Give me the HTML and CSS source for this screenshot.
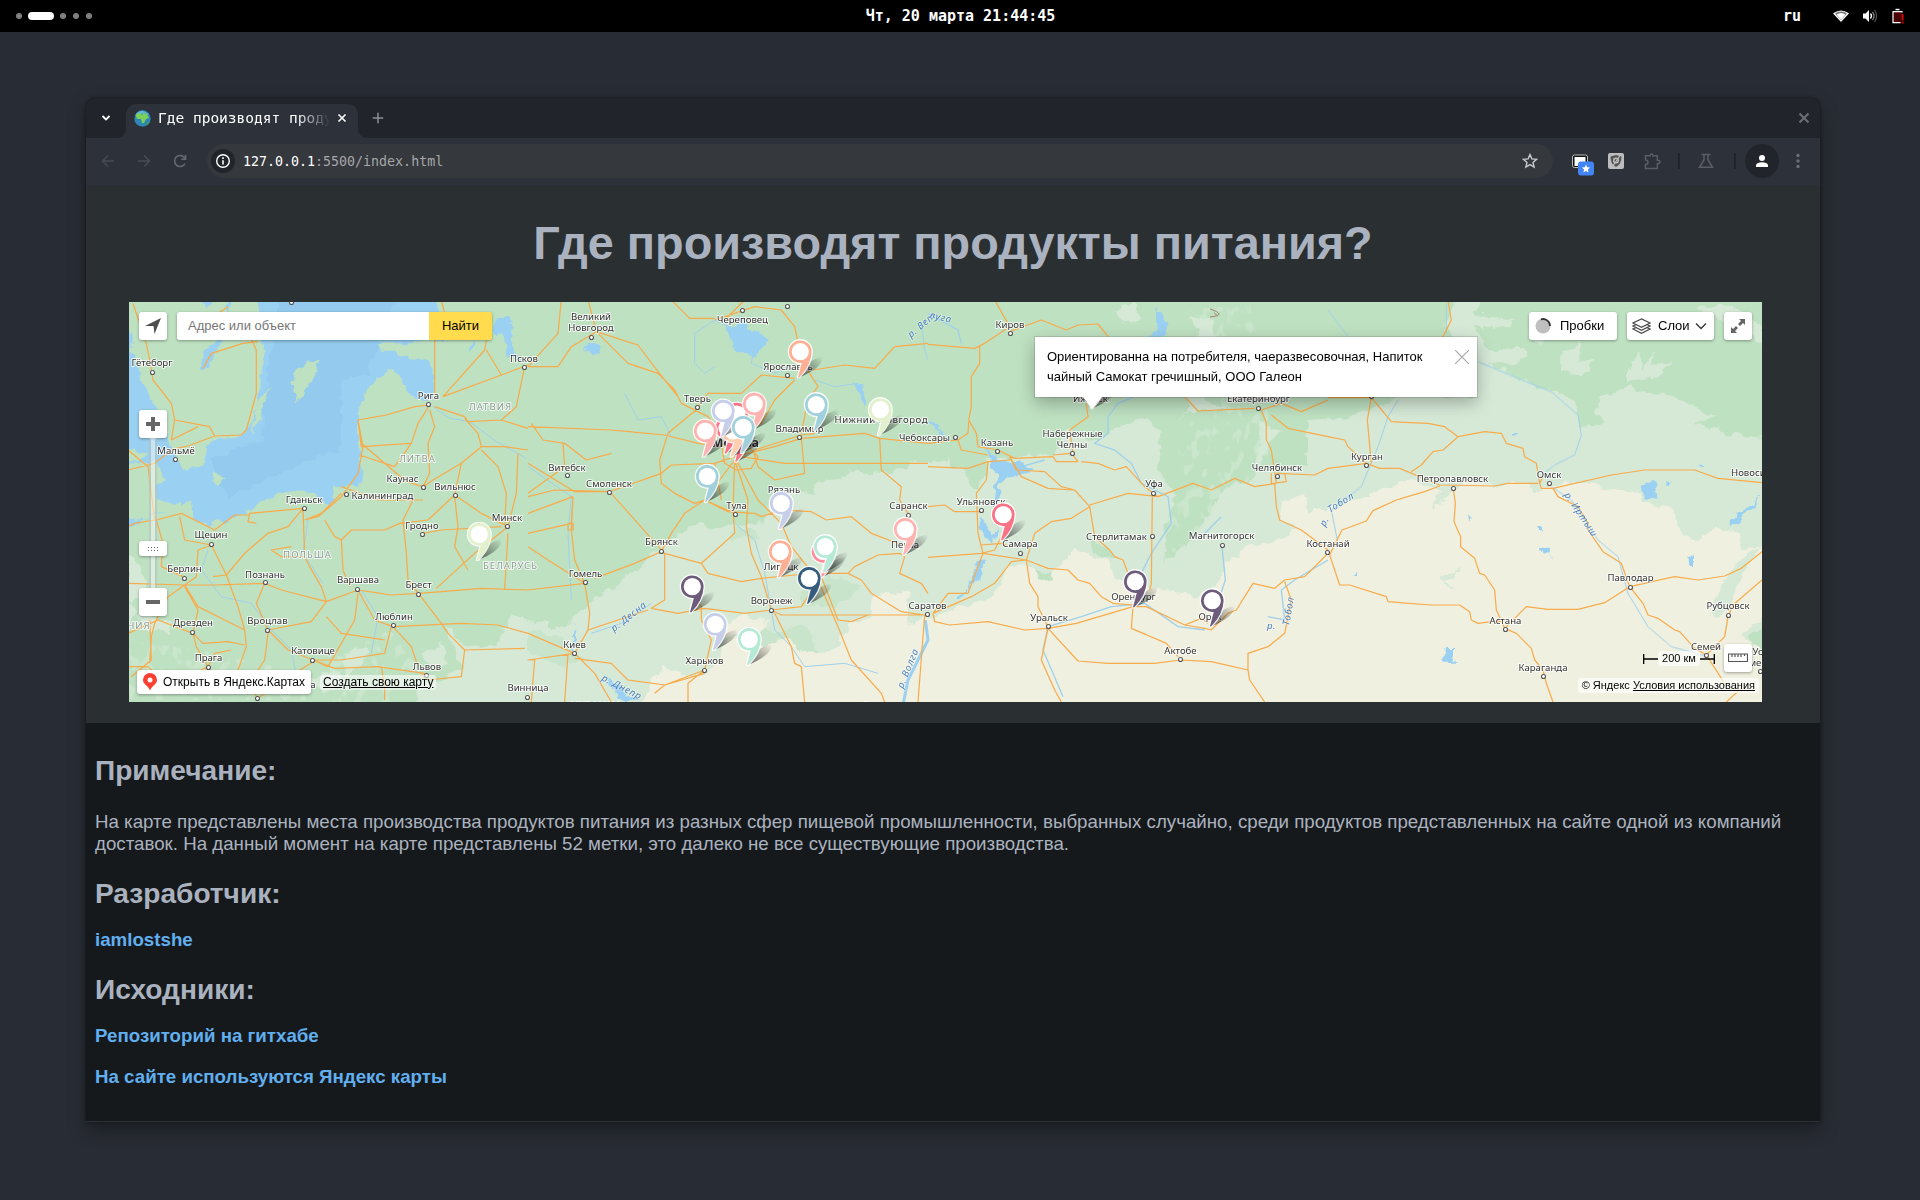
FILE: index.html
```html
<!DOCTYPE html>
<html lang="ru">
<head>
<meta charset="utf-8">
<title>Где производят продукты питания?</title>
<link rel="stylesheet" href="styles.css">
</head>
<body>
<header class="panel">
  <div class="workspaces"><i></i><i class="on"></i><i></i><i></i><i></i></div>
  <div class="clock">Чт, 20 марта 21:44:45</div>
  <div class="tray">
    <span class="lang">ru</span>
    <svg width="16" height="16" viewBox="0 0 16 16"><path d="M1 5.5Q8 .5 15 5.500L8 13z" fill="#777" stroke="#fff" stroke-width="1.200"/><path d="M3.500 6.500Q8 3.500 12.500 6.500L8 11.500z" fill="#fff"/></svg>
    <svg width="16" height="16" viewBox="0 0 16 16"><path d="M1 5.500h2.500L7 2v12l-3.500-3.500H1z" fill="#fff"/><path d="M8.500 5.500q2 2.500 0 5" fill="none" stroke="#fff" stroke-width="1.300"/><path d="M10.500 3.800q3 4.200 0 8.400" fill="none" stroke="#888" stroke-width="1.200"/><path d="M12.500 2q4 6 0 12" fill="none" stroke="#555" stroke-width="1.200"/></svg>
    <svg width="14" height="16" viewBox="0 0 14 16"><path d="M4.500 1.500h4" stroke="#fff" stroke-width="1.400"/><path d="M11 4.500v-.9H2v11h7.500" fill="#4a0000" stroke="#fff" stroke-width="1.200"/><path d="M11.500 6v6.500M11.500 13.500v2" stroke="#d00" stroke-width="2"/></svg>
  </div>
</header>

<main class="window">
  <div class="tabstrip">
    <div class="tabmenu"><svg width="10" height="8" viewBox="0 0 10 8"><path d="M1.500 2L5 5.500 8.500 2" fill="none" stroke="#fff" stroke-width="1.800"/></svg></div>
    <div class="tab">
      <svg width="17" height="17" viewBox="0 0 17 17"><circle cx="8.500" cy="8.500" r="8.200" fill="#2f86b5"/><path d="M2 4Q5 .5 9 .7L15 4 14 5 11 3 4 5z" fill="#5fb4dd"/><path d="M1.500 5Q3 3 6 3L8 5 9.500 3 13 4 15 8 12 9 10 13 8 13 7 9 3 9z" fill="#7bd05b"/><path d="M12 13l4-1-3 3.500z" fill="#3fa04d"/></svg>
      <span class="tabtitle">Где производят продукты</span>
      <svg width="10" height="10" viewBox="0 0 10 10"><path d="M1.500 1.500l7 7m0-7l-7 7" stroke="#fff" stroke-width="1.600"/></svg>
    </div>
    <svg class="newtab" width="12" height="12" viewBox="0 0 12 12"><path d="M6 .8v10.400M.8 6h10.400" stroke="#8c9096" stroke-width="1.500"/></svg>
    <svg class="winclose" width="12" height="12" viewBox="0 0 12 12"><path d="M1.500 1.500l9 9m0-9l-9 9" stroke="#6b6f76" stroke-width="2"/></svg>
  </div>
  <div class="toolbar">
    <svg width="14" height="14" viewBox="0 0 14 14"><path d="M13 7H1.500M7 1.500L1.500 7 7 12.500" fill="none" stroke="#474b52" stroke-width="1.500"/></svg>
    <svg width="14" height="14" viewBox="0 0 14 14"><path d="M1 7h11.500M7 1.500L12.500 7 7 12.500" fill="none" stroke="#474b52" stroke-width="1.500"/></svg>
    <svg width="14" height="14" viewBox="0 0 14 14"><path d="M12 9.500A5.500 5.500 0 1 1 12 4.500M12.500 1v4.200H8.300" fill="none" stroke="#666a70" stroke-width="1.600"/></svg>
    <div class="omnibox">
      <span class="info"><svg width="16" height="16" viewBox="0 0 16 16"><circle cx="8" cy="8" r="6.300" fill="none" stroke="#fff" stroke-width="1.400"/><path d="M8 4.300v1.600M8 7.200v4.300" stroke="#fff" stroke-width="1.600"/></svg></span>
      <span class="url"><b>127.0.0.1</b>:5500/index.html</span>
      <svg class="star" width="16" height="16" viewBox="0 0 16 16"><path d="M8 1.500l1.900 4.400 4.700.4-3.600 3.100 1.100 4.700L8 11.600l-4.100 2.500L5 9.400 1.400 6.300l4.700-.4z" fill="none" stroke="#c8cacc" stroke-width="1.400"/></svg>
    </div>
    <svg class="ext" width="24" height="24" viewBox="0 0 24 24"><rect x="2.500" y="3" width="15" height="12.500" rx="2" fill="#111" stroke="#b9beb5"/><path d="M4.500 5h11v9h-11z" fill="#fff"/><rect x="8" y="9.500" width="16" height="14" rx="3" fill="#4285f4"/><path d="M16 12.500l1.200 2.800 3 .2-2.300 2 .7 3-2.600-1.600-2.600 1.600.7-3-2.300-2 3-.2z" fill="#fff"/></svg>
    <svg width="16" height="16" viewBox="0 0 16 16"><rect width="16" height="16" rx="2" fill="#bdbdbd"/><path d="M8 2l5.500 1.500q0 8-5.500 10.500Q2.500 11.500 2.500 3.500z" fill="#555"/><circle cx="8" cy="7.500" r="2.300" fill="none" stroke="#bdbdbd" stroke-width="1.500"/><path d="M13 1L5 13" stroke="#bdbdbd" stroke-width="1.200"/></svg>
    <svg width="17" height="17" viewBox="0 0 17 17"><path d="M1.500 2.800H6.300V2.400Q6.500 1 7.700 1T9 2.400v.4h4.300V7.300Q16 7.300 16 9t-2.700 1.700v4.800H1.500V11.500Q4 11.300 4 9.200T1.500 6.900z" fill="none" stroke="#5a5e64" stroke-width="1.500"/></svg>
    <i class="sep"></i>
    <svg class="flask" width="16" height="16" viewBox="0 0 16 16"><path d="M3.500 1.500h9M6 1.500V7L1.500 14.300h13L10 7V1.500" fill="none" stroke="#5a5e64" stroke-width="1.500"/></svg>
    <i class="sep s2"></i>
    <span class="avatar"><svg width="14" height="14" viewBox="0 0 14 14"><circle cx="7" cy="4" r="3" fill="#fff"/><path d="M1 13v-2q1-2.800 6-2.800T13 11v2z" fill="#fff"/></svg></span>
    <svg class="dots" width="4" height="16" viewBox="0 0 4 16" fill="#6b6f75"><circle cx="2" cy="2.500" r="1.700"/><circle cx="2" cy="8" r="1.700"/><circle cx="2" cy="13.500" r="1.700"/></svg>
  </div>

  <section class="hero">
    <h1>Где производят продукты питания?</h1>
    <div class="map">
      <svg class="canvas" width="1633" height="400" viewBox="129 302 1633 400">
        <defs>
          <filter id="rough" filterUnits="userSpaceOnUse" x="120" y="290" width="1660" height="430"><feTurbulence type="fractalNoise" baseFrequency=".09" numOctaves="3" seed="4" result="n"/><feDisplacementMap in="SourceGraphic" in2="n" scale="11" xChannelSelector="R" yChannelSelector="G"/></filter>
          <filter id="relief" filterUnits="userSpaceOnUse" x="120" y="290" width="1660" height="430"><feTurbulence type="fractalNoise" baseFrequency=".11 .07" numOctaves="2" seed="9" result="n"/><feColorMatrix in="n" values="0 0 0 0 .66  0 0 0 0 .83  0 0 0 0 .68  9 0 0 0 -4.9" result="m"/><feComposite in="m" in2="SourceGraphic" operator="in"/></filter>
          <linearGradient id="sh" x1="0" y1="1" x2="1" y2="0"><stop offset="0" stop-opacity=".6"/><stop offset=".5" stop-opacity=".3"/><stop offset="1" stop-opacity="0"/></linearGradient>
          <g id="c"><circle r="2" fill="#fff" stroke="#555" stroke-width="1.100"/></g>
          <g id="pin"><path d="M-2 26C4 13 12 7 22 5 23 13 13 20-2 26z" fill="url(#sh)"/><path d="M11.300 0A11.300 11.300 0 1 0 1.500 11.200L-2.300 25.500H-1Q11 13 11.300 0z" fill="currentColor" stroke="#fff" stroke-opacity=".85" stroke-width="2.600" stroke-linejoin="round" paint-order="stroke"/><circle r="8.600" fill="#fff"/></g>
        </defs>
        <rect x="129" y="302" width="1633" height="400" fill="#bee1c1"/>
        <g filter="url(#rough)">
          <g transform="translate(128 300) scale(.33333)">
            <path class="lt" d="M950 970L1010 1040 1100 1040 1130 990 1200 970 1260 960V1260H850L870 1150 950 1140 1000 1100zM0 900L30 930 0 980zM650 1060L720 1040 700 1100 650 1130zM0 760l40 50 30 90-70 0zM20 950l110 10 0 40-70-10zM880 1060l60-30 20 60-50 20zM530 1140l90-30 30 40-60 30z"/>
            <path class="sea" d="M395-30L400 100 405 150 400 200 390 300 370 370 345 405 265 415 230 440 240 470 220 500 170 505 150 480 125 430 110 380 85 330 70 290 40 230 20 180 10 100-30 60V700L60 655 150 625 185 605 200 660 230 672 300 660 370 625 430 590 510 570 560 590 590 625 620 600 615 560 655 562 700 550 705 500 690 420 690 340 725 260 750 235 795 210 820 230 840 280 880 303 915 290 920 220 895 180 850 185 830 155 880 125 960 125 930 60 940-30z"/>
            <path class="deep" d="M450 0H800L720 220 640 240 640 440 450 520 300 600 250 480 400 420 420 210z"/>
            <path class="land" d="M495 240l40-55 40 0-20 60-50 65-10-40zM375 400l10-80 40-60-20 70-25 70zM255 515l35 20-20 20-20-15zM-20 500l100-20 30 60-30 20 20 60-50 40-70-10zM750 130h120v40h-60l-10-15-50 0zM-20 440l80 20-20 20-60 20zM100 610l50 0 0 20-80 15zM560 590l60 30-30 20z"/>
            <path class="sea" d="M220 210l10-60 60-50-30 70-35 50zM1100 50h50v70l20 60-30-10-15-60-25-20zM1030 120l10 20-10 15zM210 0h40l-20 20zM290 -10h20l-10 60z"/>
          </g>
          <g transform="translate(528 300) scale(.33333)">
            <path class="lt" d="M1260 480L1060 520 960 510 940 540 870 545 850 585 770 565 740 590 700 670 600 675 560 690 520 668 470 690 400 730 350 790 270 850 230 880 190 905 130 960 90 990 0 960-60 940V1260H1260z"/>
            <path class="land" d="M610 680h50l40 30-90 10zM630 960l50-10 50 50 50-20 60 0 30 80-60 0-60-40-50 60-60-20zM810 880l60-40 70-10 60 30-70 60-100 0zM40 830l180 10-20 60-60 20zM0 990l100 20 60 60-50 30-110-40z" opacity=".55"/>
            <path class="cr" d="M1260 870L1120 880 1035 885 1030 950 970 970 920 1050 830 1055 780 1020 700 1040 640 1000 600 1010 560 1100 500 1130 400 1100 360 1160 330 1260H1260zM560 985l90-40 70 20-30 40-120 10z"/>
            <path class="sea" d="M595 75l30 10 10-30 50 40 35 30-20 20-20 30-30-20-30-10-20-50zM165 150l20-25 30 10 5 20-25 10zM980 255l25 0 10 60-10 10-15-50zM230 1130l100 70h-60zM135 960l8 60-8 50z"/>
          </g>
          <g transform="translate(928 300) scale(.33333)">
            <path class="lt" d="M-60 480L100 510 150 570 180 520 170 480 380 460 420 380 500 420 560 390 650 350 700 400 780 330 770 270 900 330 1060 390 1010 450 1000 520 1100 500 1260 480V1260H-60zM560 30l60-20 20 50-50 10zM790 50l60 0 20 80-50-10zM420 120l60 60 20 130-40-30z"/>
            <path class="land" d="M700 390l90-60 120 0 90 40-20 160-90 40-70 110-50 60-60 40 0-90 30-80-20-60-30-40zM480 710l60 40 20 20-40 10zM320 810l60 10-10 40-50 0z"/>
            <path class="cr" d="M-60 970L100 920 200 890 240 800 300 790 350 850 390 800 450 750 540 785 560 840 700 865 800 890 870 860 890 790 960 740 1060 720 1110 690 1050 650 1060 610 1130 580 1170 650 1260 640V1260H-60z"/>
            <path class="sea" d="M200 550l-5 50 15 80-15 30-30-60-15 20 25 40 15 20 20-20 0-20 5-50-5-80 40-30 60-20-30-30-70 10-30-60 5 60 30 30zM685 30h15l20 50-10 30h-60l40-20zM0 370l20-5 30 40-20-15zM150 790l-30 80-30 30 10 0 50-60 20-60z"/>
          </g>
          <g transform="translate(1328 300) scale(.33333)">
            <path class="lt" d="M-60 500V360L80 350 140 320 230 290 440 290 440 180 380 130 350 70 390-30H500L430 40 560 60 500 90 440 80 480 150 600 150 570 190 480 190 600 250 740 300 760 380 830 370 800 340 820 290 900 260 1060 300 1160 350 1090 370 1200 400 1380 430V900H-60zM1100 20l120 0 80 60 20 70-60-50zM900 220l30-60 10 50 40-60-10 50 60-20-40 50-90 20zM700 150l60-20-10 60 50-10-30 50-70-20zM600 110l50-40 0 60z"/>
            <path class="cr" d="M-60 640L80 600 160 570 250 540 340 570 310 630 360 590 420 540 500 565 560 545 620 570 700 550 780 545 850 570 940 580 940 610 1040 630 1050 690 1100 720 1170 680 1230 700 1240 750 1390 720V1260H-60z"/>
            <path class="lt" d="M1190 840l40-60 70-40-50 70-30 80-40 70-30-20 20-60zM330 830l60-20-10 20-40 20 50 20-50-10zM1240 1000l80-60v140l-60-60z"/>
            <path class="land" d="M1260 1010l50-40v100z"/>
            <path class="sea" d="M940 550l40-5 5 50-35 5zM1015 545h15v12h-15zM630 680l15-5 0 20zM635 740l30 0 5 30-20-10zM1078 770l20 0 0 25-15 0zM350 1050h25v20l15 15-40 0zM420 650l12 0-8 14zM68 825l16-15 0 15zM550 405l20 0-12 12zM1110 490l16 2-10 8zM1205 660l100-75-50 60-50 40z"/>
          </g>
        </g>
        <g filter="url(#relief)" opacity=".55">
          <path d="M1180 430l40-30 60 10-10 50-40 40-25 50-30 25-15-20 15-50zM1180 310l70-5 15 60-20 35-50 0zM129 640l70 10 90 20 60 30H129zM330 660l60-30 30 40-30 32h-60z"/>
        </g>
        <g class="rivers" fill="none" stroke="#9fd0ea" stroke-width="3">
          <path transform="translate(128 300) scale(.33333)" d="M915 320l50 35 60 10 80 60 90 50M240 750l-20 60 60 80 90 20 60 80 60 60 20 100M540 660l-15 100 60 90M700 870l50 80-20 110"/>
          <path transform="translate(528 300) scale(.33333)" d="M500 190l0-90 60-40 60 30M500 190l30 30 30-20M680 130l-10 60 70 30 40-20M290 280l40 80 70-10 30 60M620 670l60 50 30 100 20 110 10 60 50 50 40 60 120-10 100 30M190 1000l90-30 90-60M1180 70l10 80 10 30M860 240l60 20 70-10M0 500l130 90-10 110 10 200"/>
          <path transform="translate(528 300) scale(.33333)" stroke-width="9" stroke="#9ad0f1" d="M1192 960l8 60-30 60-30 60-14 70"/>
          <path transform="translate(928 300) scale(.33333)" stroke-width="4" d="M620 290l-50 20-30 40 0 50-40 30 60 20 50 40 30 60 80 40 10 80-60 90-30 60M360 980l100-30 90-30 100-10 100 70 80 10M360 980l-15 70 60 140M880 650l-60 60M882 740l10 100-20 60M1200 780l-100 60-40 30 10 90-50-10M280 500l70-20M0 40l90 50 10 40"/>
          <path transform="translate(1328 300) scale(.33333)" d="M450 185l120 50 100 40 80 70 10 60-20 60-60 30-50 40M670 560l60 40 80 120 60 50 30 110 60 100 70 60 110 30M210 300l-30 50-30 90-50 120-90 70 20 100M355 10l0 90M0 30l60 80"/>
        </g>
        <g class="roads">
          <path transform="translate(128 300) scale(.33333)" d="M15 10L55 130 65 180 75 240 130 310 140 360 245 380 260 408M210 80l90-60M390 125L345 130 250 160 225 205M360 100l25 50 0 130-30 110-15 15-80 3-80 30-50 10M140 360l-10 60 80-40M0 510l80-20 50-40M0 450l60 50 20 160-60 10-20 10M940 0l10 40-30 80 0 170M945 290L1070 150 1090 40M945 290L1120 225 1200 195M1075 150L1120 225M1190 200L1165 320 1120 360M905 315L860 320 775 345 690 360 700 440 850 430M905 315L870 370 850 430 800 500 695 465M690 360L705 440 690 520 640 590 570 650 530 660M905 330L920 380 900 430 905 520 885 560M920 320L1010 350 1020 365 1120 360 1200 385M1010 355L1050 400 1060 440 1130 440 1200 450M1060 440L1000 490 915 540 885 560 835 545 700 430M1060 450L1110 500 1135 580 1130 680M1000 490L980 585 1060 640 1140 680M1170 460L1165 580 1140 680M885 600L750 600 640 560M980 585L900 660 815 670 770 690 670 690 640 720M855 600L825 660 835 760 840 840 875 885M980 590L990 680 980 740 1020 810M1140 680L1040 760 925 865M1140 700L1130 870M885 700L940 690 1120 680M690 870L595 905 460 870 410 850 255 855 170 855 0 850M690 870L790 885 875 880 1060 865 1200 870M690 880L680 960 600 1100 555 1080M690 870L740 960 795 980 1000 970 1110 975 1200 1000M875 885L940 970 960 1000 1010 1050 1000 1130 900 1140 880 1120M1010 1050L1190 1045M595 905L580 860 545 800 530 770 525 625M530 770L460 770 430 750 490 740M530 660L580 640 640 580M590 660L620 710 640 720 645 810 665 860M525 625L365 640 360 665 385 670M525 625L480 680 420 700 350 760 295 825 255 830M250 735L295 825 330 920 350 990 355 1040 330 1110 390 1195M250 735L170 720 155 650M250 735L210 750 205 830 170 855 120 890 80 970 70 1010 65 1090M85 660L160 640 260 690 320 645 365 645M85 660L105 730 100 800 165 830M195 1000L210 930 170 860M195 1000L90 960 0 1000M195 1000L225 1030 300 1025 350 1035M195 1000L205 1040 240 1100 260 1060 310 1050M0 1100L60 1100 120 1160 240 1100 270 1150 330 1110M65 960L70 1080 10 1130M70 1150L230 1170M410 850L385 910 420 990 550 965 595 905M420 990L480 1050 555 1080 620 1105 750 1100 890 1120M420 1000L410 1080 350 1170M790 980L770 1060 640 1080 550 1080M795 980L850 1040 870 1100M595 950L640 1000 770 1020M170 855L210 920 290 960 350 990M760 1100l10 60 0 40M390 1195L470 1140 555 1085"/>
          <path transform="translate(528 300) scale(.33333)" d="M100 0L90 100 0 200M180 0L205 95 240 130 300 190 390 220 440 270 460 310 540 350 590 420M205 95L130 140 90 200 0 200M205 95L330 135 390 215 450 290M430 0L485 55 560 55M590 60L650 0M560 60L680 20 760 30 800 80 815 150 845 220 870 260 840 300 820 400M700 225L640 280 540 280 510 320M700 225L800 235M855 210L950 195 1040 205 1100 140 1200 130M800 240L740 300 700 370 640 400M0 380L250 390 410 405 510 430 580 440M510 325L420 400 395 480 400 550 440 580 500 610 530 600M10 370L45 420 110 430 175 480 250 460M105 430L110 500 0 580M135 590L0 640M135 590L130 670 0 700M120 670v20h15v-20zM0 490L140 575 245 575 400 520 430 495 560 490 620 470M245 575L410 760 520 790 540 820 640 845 700 835 800 825 880 820M245 575L80 570 0 590M620 480L615 630 620 700 520 790M620 480L530 600 470 640 430 700 400 755 320 790 200 835M530 600L620 640M530 600L600 635 680 640 700 650 760 630 850 635 895 660 970 650 1030 700 1120 735M620 480L660 600 655 680 670 760 700 830 730 930M625 480L690 600 760 670 790 740 870 840M620 470L740 440 820 415 1010 400 1055 415 1200 430M680 450L820 405 860 400M675 450L690 500 740 540 830 520 820 415M580 430L590 490 625 510 670 505 690 470 660 440 600 450zM640 470L770 490 1050 490 1200 490M1055 415L1060 510 1120 560 1115 600 1140 640M1115 760L1050 765 980 800 960 820 880 820M1115 760L1130 770 1115 820 1180 850 1200 880M960 820L1000 840 1030 880 1120 935 1190 945M730 930L760 945 1190 945M730 930L650 940 530 925 450 940 370 925 410 900 410 760M730 930L820 920 880 830 930 960M870 840L930 980 970 1080 1060 1180 1070 1206M930 960L970 965 1020 945M740 940L790 1040 800 1090 820 1100 830 1206M480 870L520 920 520 960 550 1020 530 1110M530 1110L480 1150 480 1206M530 1120L410 1155 380 1180M530 1110L410 1155 300 1140 250 1090 140 1075M140 1060L180 990 360 930M180 990L185 940 170 850 0 870M170 850L140 780 130 690 135 590M170 850L60 780 0 740M140 1060L0 1000M140 1060L0 1080 20 1080 10 1206M120 1060L110 1206M140 1060L200 1120 250 1206M560 490L580 600M1190 945L1170 1206"/>
          <path transform="translate(928 300) scale(.33333)" d="M200 0L245 80 170 130 140 145 0 133M245 95L340 60 415 90 450 75 510 72 540 110M155 140L155 190 130 230 130 320 122 360M122 360L145 400 150 440 210 450 260 475 375 470 385 485 450 485 430 460 375 465M122 365L120 400 90 420 0 430M90 420L100 450 180 465M0 500L120 505 180 485M180 485L245 480 250 470M180 485L175 540 145 580 150 700 165 760 120 880 60 880 15 940M245 470L265 510 350 515 400 560 440 570 485 620 430 655 370 665 320 700 295 780M245 470L280 530 360 565 435 570M485 620L500 710 545 750 560 770 585 780 600 820M485 615L600 580 690 590 795 550 850 570 920 535 980 560 1045 550M460 485L510 490 560 510 595 500 650 560 690 590M425 390L480 350 475 310M425 390L435 460M673 590L670 850 665 870M0 620L50 615 80 635 160 635M0 772L160 760 200 750 220 710M160 735L220 730 245 740M165 760L295 780 250 785 200 850 130 890 15 940M295 780L360 805 420 810 450 840 485 850 520 890 555 910 615 915M295 780L305 850 330 890 330 920 360 980M15 940L20 965 65 975 180 965 290 990 360 985 445 970 615 920M615 920L655 920 770 975 820 955 840 970M850 990L900 940 925 930 975 850 1040 865 1070 840 1130 830 1200 760M770 975L830 985 850 990M615 920L610 985 715 1030 750 1070M360 985L340 1080 380 1170 400 1206M360 985L450 1083 540 1090 680 1090 757 1080 850 1085 960 1110 960 1060 1020 1040 1070 1000 1090 900 1070 845M960 1110L965 1140 1010 1206M770 290L810 333 980 325M1000 330L1015 370 1015 420 1030 450 1045 550M1030 345L1080 385 1200 410M1000 330L1060 310 1120 335 1200 300M1040 550L1045 620 1055 660 1120 690 1200 750M1045 520L1160 525 1200 505M1030 520L1030 550 1075 545 1070 520"/>
          <path transform="translate(1328 300) scale(.33333)" d="M360 0L370 60 340 120M0 293L130 293 190 365 300 370 350 380 390 410 470 395 520 400 535 430 585 445 590 470 625 490 635 550M130 293L118 360 130 490M0 410L50 420 60 440 115 490 155 505 215 505 335 555 500 558 540 550 630 550M115 490L0 505M250 515L280 495 315 455 345 450 390 410M335 558L290 575 205 600 135 632 115 663 42 690 5 765M376 567L382 610 378 665 398 710 398 740 440 775 455 820 470 825 500 870 505 930 530 985M5 765L35 855 65 855 175 890 180 905 310 915 395 915 425 935 430 960 450 970 530 960M530 985L595 920 660 928 750 928 830 908 905 860 1040 830 1110 840 1190 828 1240 805 1302 755M530 985L565 1000 610 1045 620 1080 645 1110 655 1150 675 1206M635 550L640 565 675 565 850 525 950 510 1015 510 1100 510 1170 535 1302 548M675 565L690 590 750 620 780 670 780 690 825 755 880 790 905 860 945 910 960 945 990 955 1040 990 1055 995 1100 1045 1135 1065 1190 1150M635 550L645 530M1302 840L1215 915 1200 950 1190 1010 1135 1065M1195 1206L1240 1165"/>
        </g>
        <path d="M1210 309q9 3 9 5t-9 3M1214 313l4 3" fill="none" stroke="#a58370" stroke-width="1"/>
        <g class="river-names">
          <text transform="translate(911 338) rotate(-40)">р. Вет</text><text transform="translate(929 318) rotate(12)">луга</text>
          <text transform="translate(614 632) rotate(-38)">р. Десна</text><text transform="translate(601 680) rotate(27)">р. Днепр</text>
          <text transform="translate(903 689) rotate(-68)">р. Волга</text><text transform="translate(1267 629)">р.</text><text transform="translate(1289 626) rotate(-80)">Тобол</text>
          <text transform="translate(1325 527) rotate(-63)">р.</text><text transform="translate(1330 513) rotate(-32)">Тобол</text><text transform="translate(1564 495) rotate(56)">р. Иртыш</text>
        </g>
        <g class="countries">
          <text x="490.500" y="410">ЛАТВИЯ</text><text x="417.500" y="461.500">ЛИТВА</text><text x="307.500" y="557.500">ПОЛЬША</text><text x="510.500" y="569">БЕЛАРУСЬ</text><text x="139" y="629">НИЯ</text><text x="597" y="709">УКРАИНА</text>
        </g>
        <g class="dots-c">
          <use href="#c" x="152.500" y="372.500"/><use href="#c" x="428.500" y="404.500"/><use href="#c" x="524.500" y="367.500"/><use href="#c" x="175.500" y="459.500"/><use href="#c" x="346.500" y="494.500"/><use href="#c" x="423.500" y="487.500"/><use href="#c" x="455.500" y="495.500"/><use href="#c" x="304.500" y="508.500"/><use href="#c" x="507.500" y="526.500"/><use href="#c" x="422.500" y="534.500"/><use href="#c" x="211.500" y="544.500"/><use href="#c" x="184.500" y="578.500"/><use href="#c" x="265.500" y="582.500"/><use href="#c" x="357.500" y="589.500"/><use href="#c" x="418.500" y="594.500"/><use href="#c" x="192.500" y="632.500"/><use href="#c" x="267.500" y="630.500"/><use href="#c" x="393.500" y="625.500"/><use href="#c" x="208.500" y="667.500"/><use href="#c" x="312.500" y="660.500"/><use href="#c" x="426.500" y="675.500"/><use href="#c" x="257.500" y="698.500"/><use href="#c" x="291.500" y="302.500"/><use href="#c" x="527.500" y="697.500"/>
          <use href="#c" x="591.500" y="337.500"/><use href="#c" x="742.500" y="310.500"/><use href="#c" x="787.500" y="306.500"/><use href="#c" x="787.500" y="375.500"/><use href="#c" x="697.500" y="407.500"/><use href="#c" x="799.500" y="437.500"/><use href="#c" x="567.500" y="475.500"/><use href="#c" x="609.500" y="492.500"/><use href="#c" x="735.500" y="514.500"/><use href="#c" x="661.500" y="551.500"/><use href="#c" x="585.500" y="582.500"/><use href="#c" x="771.500" y="610.500"/><use href="#c" x="574.500" y="653.500"/><use href="#c" x="704.500" y="670.500"/><use href="#c" x="908.500" y="515.500"/><use href="#c" x="927.500" y="614.500"/>
          <use href="#c" x="1010.500" y="333.500"/><use href="#c" x="955.500" y="437.500"/><use href="#c" x="997.500" y="451.500"/><use href="#c" x="1072.500" y="453.500"/><use href="#c" x="981.500" y="510.500"/><use href="#c" x="1020.500" y="553.500"/><use href="#c" x="1153.500" y="493.500"/><use href="#c" x="1152.500" y="536.500"/><use href="#c" x="1258.500" y="408.500"/><use href="#c" x="1277.500" y="476.500"/><use href="#c" x="1222.500" y="545.500"/><use href="#c" x="1048.500" y="626.500"/><use href="#c" x="1180.500" y="659.500"/><use href="#c" x="1327.500" y="552.500"/>
          <use href="#c" x="1366.500" y="465.500"/><use href="#c" x="1453.500" y="488.500"/><use href="#c" x="1549.500" y="483.500"/><use href="#c" x="1630.500" y="587.500"/><use href="#c" x="1505.500" y="629.500"/><use href="#c" x="1543.500" y="676.500"/><use href="#c" x="1728.500" y="615.500"/><use href="#c" x="1706.500" y="655.500"/><use href="#c" x="1760.500" y="671.500"/><use href="#c" x="1371.500" y="396.500"/>
        </g>
        <g class="cities">
          <text x="152" y="366">Гётеборг</text><text x="428.500" y="398.500">Рига</text><text x="524" y="362">Псков</text><text x="176" y="453.500">Мальмё</text><text x="382.500" y="498.500">Калининград</text><text x="402.500" y="481.500">Каунас</text><text x="455" y="490">Вильнюс</text><text x="304" y="502.500">Гданьск</text><text x="507" y="520.500">Минск</text><text x="422" y="528.500">Гродно</text><text x="211" y="538">Щецин</text><text x="184.500" y="572">Берлин</text><text x="265" y="577.500">Познань</text><text x="358" y="582.500">Варшава</text><text x="418.500" y="588">Брест</text><text x="193" y="626">Дрезден</text><text x="267.500" y="624">Вроцлав</text><text x="394" y="620">Люблин</text><text x="208.500" y="660.500">Прага</text><text x="313" y="654">Катовице</text><text x="427" y="670">Львов</text><text x="313" y="688">а</text><text x="528" y="690.500">Винница</text>
          <text x="591" y="319.500">Великий</text><text x="591" y="330.500">Новгород</text><text x="742.500" y="323">Череповец</text><text x="788" y="369.500">Ярославль</text><text x="697.500" y="401.500">Тверь</text><text x="799.500" y="431.500">Владимир</text><text x="881" y="422.500" textLength="93">Нижний Новгород</text><text x="735.500" y="447" class="capital">Москва</text><text x="567" y="470.500">Витебск</text><text x="609" y="486.500">Смоленск</text><text x="736.500" y="508.500">Тула</text><text x="784" y="492.500">Рязань</text><text x="908.500" y="509">Саранск</text><text x="905" y="547.500">Пенза</text><text x="661.500" y="545">Брянск</text><text x="781" y="569.500">Липецк</text><text x="585.500" y="576.500">Гомель</text><text x="771.500" y="603.500">Воронеж</text><text x="574.500" y="648">Киев</text><text x="704.500" y="663.500">Харьков</text><text x="927.500" y="608.500">Саратов</text><text x="888" y="709">Волгоград</text>
          <text x="1010" y="327.500">Киров</text><text x="924.500" y="441">Чебоксары</text><text x="997" y="446">Казань</text><text x="1072.500" y="437">Набережные</text><text x="1072" y="448">Челны</text><text x="1090.500" y="402">Ижевск</text><text x="981" y="504.500">Ульяновск</text><text x="1020" y="547">Самара</text><text x="1154" y="487">Уфа</text><text x="1116.500" y="540">Стерлитамак</text><text x="1258.500" y="402">Екатеринбург</text><text x="1277" y="471">Челябинск</text><text x="1221.500" y="538.500">Магнитогорск</text><text x="1133.500" y="600">Оренбург</text><text x="1210" y="619.500">Орск</text><text x="1049" y="620.500">Уральск</text><text x="1180.500" y="654">Актобе</text><text x="1328" y="547">Костанай</text>
          <text x="1367" y="459.500">Курган</text><text x="1452.500" y="482">Петропавловск</text><text x="1549" y="477.500">Омск</text><text x="1762" y="475.500">Новосибирск</text><text x="1630.500" y="580.500">Павлодар</text><text x="1728" y="609">Рубцовск</text><text x="1505.500" y="623.500">Астана</text><text x="1543" y="670.500">Караганда</text><text x="1706" y="650">Семей</text><text x="1764" y="655">Усть-</text><text x="1768" y="666">Каменогорск</text>
        </g>
        <g>
          <use href="#pin" x="734" y="430" color="#6c5b7b"/><use href="#pin" x="737.500" y="436" color="#fb7185"/><use href="#pin" x="737" y="414" color="#fb7185"/><use href="#pin" x="727" y="428" color="#fb7185"/><use href="#pin" x="754.300" y="404" color="#ffb3b0"/><use href="#pin" x="733" y="431" color="#ffcfb0"/><use href="#pin" x="723.300" y="411" color="#c7ceea"/><use href="#pin" x="705.300" y="431" color="#ffb3b0"/><use href="#pin" x="743.300" y="427.300" color="#a0d0dc"/>
          <use href="#pin" x="800.300" y="351.700" color="#fcaf93"/><use href="#pin" x="816.300" y="404.700" color="#a0d0dc"/><use href="#pin" x="880.300" y="409.700" color="#e2f0cb"/><use href="#pin" x="707.300" y="476.300" color="#a0d0dc"/><use href="#pin" x="781.300" y="503.300" color="#c7ceea"/><use href="#pin" x="905.300" y="529.300" color="#ffb3b0"/><use href="#pin" x="780.300" y="551.700" color="#fcaf93"/><use href="#pin" x="823" y="551.500" color="#ff8b9c"/><use href="#pin" x="825.300" y="546.700" color="#b5ead7"/><use href="#pin" x="809.300" y="578.300" color="#355c7d"/><use href="#pin" x="692.300" y="586.700" color="#6c5b7b"/><use href="#pin" x="715.300" y="624.300" color="#c7ceea"/><use href="#pin" x="749.300" y="639.300" color="#b5ead7"/><use href="#pin" x="479.300" y="534.300" color="#e2f0cb"/><use href="#pin" x="1003.300" y="514.700" color="#fb7185"/><use href="#pin" x="1135.300" y="581.700" color="#6c5b7b"/><use href="#pin" x="1212.300" y="600.700" color="#6c5b7b"/><use href="#pin" x="1093.300" y="382.700" color="#ffb3b0"/>
        </g>
      </svg>

      <div class="controls">
        <button class="btn sq"><svg width="18" height="18" viewBox="0 0 18 18"><path d="M1 9L17 1 10.500 17 9.500 9z" fill="#4d4d4d"/></svg></button>
        <div class="search"><span>Адрес или объект</span><button>Найти</button></div>
        <button class="btn traffic"><svg width="16" height="16" viewBox="0 0 16 16"><circle cx="8" cy="8" r="7.500" fill="#bfbfbf"/><path d="M6 1.300A7 7 0 0 1 15 8" fill="none" stroke="#333" stroke-width="1.800"/></svg>Пробки</button>
        <button class="btn layers"><svg width="19" height="16" viewBox="0 0 19 16" fill="#fff" stroke="#4d4d4d" stroke-width="1.300"><path d="M1 11l8.500 4.300L18 11 9.500 7z"/><path d="M1 8l8.500 4.300L18 8 9.500 4z"/><path d="M1 5l8.500 4.300L18 5 9.500 1z"/></svg><span>Слои</span><svg width="12" height="8" viewBox="0 0 12 8"><path d="M1 1.500l5 5 5-5" fill="none" stroke="#333" stroke-width="1.300"/></svg></button>
        <button class="btn sq"><svg width="16" height="16" viewBox="0 0 16 16"><path d="M15 1v6l-2-2-3 3-2-2 3-3-2-2zM1 15V9l2 2 3-3 2 2-3 3 2 2z" fill="#666"/></svg></button>
      </div>

      <div class="zoom">
        <button class="btn sq"><svg width="14" height="14" viewBox="0 0 14 14"><path d="M7 0v14M0 7h14" stroke="#666" stroke-width="4"/></svg></button>
        <div class="track"><div class="thumb"></div></div>
        <button class="btn sq"><svg width="14" height="14" viewBox="0 0 14 14"><path d="M0 7h14" stroke="#666" stroke-width="4"/></svg></button>
      </div>

      <div class="links">
        <span class="open"><svg width="14" height="18" viewBox="0 0 14 18"><path d="M7 0a7 7 0 0 1 7 7c0 4-5 5.500-7 10.500C5 12.500 0 11 0 7a7 7 0 0 1 7-7z" fill="#fc3f33"/><circle cx="7" cy="7" r="2.500" fill="#fff"/></svg>Открыть в Яндекс.Картах</span>
        <a class="create">Создать свою карту</a>
      </div>

      <div class="scale"><svg width="15" height="10" viewBox="0 0 15 10"><path d="M.7 0v10M0 5h15" stroke="#000" stroke-width="1.300"/></svg><span>200 км</span><svg width="15" height="10" viewBox="0 0 15 10"><path d="M14.300 0v10M0 5h15" stroke="#000" stroke-width="1.300"/></svg></div>
      <button class="btn sq ruler"><svg width="20" height="10" viewBox="0 0 20 10"><path d="M.5 1h19v7.500H.5zM4 1v3M7 1v3M10 1v3M13 1v3M16.500 1v2" fill="none" stroke="#555" stroke-width="1.200"/></svg></button>
      <div class="copy">© Яндекс <u>Условия использования</u></div>

      <div class="balloon">
        <p>Ориентированна на потребителя, чаеразвесовочная, Напиток чайный Самокат гречишный, ООО Галеон</p>
        <svg width="14" height="14" viewBox="0 0 14 14"><path d="M0 0l14 14M14 0L0 14" stroke="#aaa" stroke-width="1.200"/></svg>
      </div>
    </div>
  </section>

  <section class="notes">
    <h2>Примечание:</h2>
    <p class="lead">На карте представлены места производства продуктов питания из разных сфер пищевой промышленности, выбранных случайно, среди продуктов представленных на сайте одной из компаний доставок. На данный момент на карте представлены 52 метки, это далеко не все существующие производства.</p>
    <h2>Разработчик:</h2>
    <p><a>iamlostshe</a></p>
    <h2>Исходники:</h2>
    <p><a>Репозиторий на гитхабе</a></p>
    <p class="next"><a>На сайте используются Яндекс карты</a></p>
  </section>
</main>
</body>
</html>
```
FILE: styles.css
```css
* { box-sizing: border-box; }
body { margin: 0; width: 1920px; height: 1200px; overflow: hidden; background: #282c34; font-family: "Liberation Sans", Arial, sans-serif; }
svg { display: block; flex: none; }
button { border: 0; margin: 0; font-family: inherit; }

.panel { height: 32px; background: #000; color: #fff; display: grid; grid-template-columns: 1fr auto 1fr; align-items: center; padding: 0 15px 0 16px; font: bold 15px "DejaVu Sans Mono", monospace; }
.workspaces { display: flex; gap: 7px; align-items: center; }
.workspaces i { width: 6px; height: 6px; border-radius: 3px; background: #808080; }
.workspaces .on { width: 26px; height: 8px; border-radius: 4px; background: #fff; margin: 0 -1px; }
.tray { display: flex; justify-content: flex-end; align-items: center; gap: 13px; }
.lang { margin-right: 19px; }

.window { width: 1734px; height: 1024px; margin: 66px 0 0 86px; background: #15191c; border-radius: 9px 9px 0 0; overflow: hidden; box-shadow: 0 8px 18px rgba(0,0,0,.35), 0 0 3px rgba(0,0,0,.5); border-bottom: 1px solid #2e3238; }
.tabstrip { height: 40px; background: #21252b; display: flex; align-items: flex-end; position: relative; font: 14.5px "DejaVu Sans Mono", monospace; color: #fff; }
.tabmenu { width: 40px; height: 40px; display: flex; align-items: center; justify-content: center; }
.tab { width: 232px; height: 34px; background: #2d313a; border-radius: 10px 10px 0 0; display: flex; align-items: center; padding: 0 11px 6px 8px; gap: 7px; position: relative; }
.tab::before, .tab::after { content: ""; position: absolute; bottom: 0; width: 10px; height: 10px; }
.tab::before { left: -10px; background: radial-gradient(circle at 0 0, transparent 10px, #2d313a 10.5px); }
.tab::after { right: -10px; background: radial-gradient(circle at 100% 0, transparent 10px, #2d313a 10.5px); }
.tabtitle { flex: 1; overflow: hidden; white-space: nowrap; -webkit-mask-image: linear-gradient(90deg, #000 80%, transparent); mask-image: linear-gradient(90deg, #000 80%, transparent); }
.newtab { margin: 0 0 14px 14px; }
.winclose { margin: 0 10px 14px auto; }

.toolbar { height: 47px; background: #2d313a; display: flex; align-items: center; padding: 0 20px 1px 15px; }
.toolbar > svg:nth-child(2), .toolbar > svg:nth-child(3) { margin-left: 22px; }
.omnibox { margin-left: 20px; width: 1347px; height: 34px; border-radius: 17px; background: #35383c; display: flex; align-items: center; padding: 0 15px 0 4px; }
.info { width: 24px; height: 24px; border-radius: 12px; background: #21252b; display: flex; align-items: center; justify-content: center; }
.url { margin-left: 8px; font: 13.3px "DejaVu Sans Mono", monospace; color: #a5a7a9; }
.url b { font-weight: normal; color: #fff; }
.star { margin-left: auto; }
.ext { margin: 5px 14px 0 17px; }
.ext + svg { margin-right: 20px; }
.sep { width: 2px; height: 16px; background: #21252b; margin-left: 17px; }
.flask { margin-left: 18px; }
.s2 { margin-left: 20px; }
.avatar { width: 34px; height: 34px; border-radius: 17px; background: #21252b; display: flex; align-items: center; justify-content: center; margin-left: 9px; }
.dots { margin-left: 17px; }

.hero { height: 538px; background: #2a2f32; padding: 31.5px 58px 0 43px; }
h1 { margin: 0 0 32.5px 0; height: 53px; line-height: 53px; font-size: 46.8px; text-align: center; color: #abb2bf; padding-left: 15px; white-space: nowrap; }
.map { position: relative; width: 1633px; height: 400px; overflow: hidden; font-size: 12px; color: #000; }
.canvas { position: absolute; left: 0; top: 0; }
.lt { fill: #d6e9d7; }
.cr { fill: #f0f0e0; }
.land { fill: #bee1c1; }
.sea { fill: #9ad0f1; }
.deep { fill: #93caed; }
.roads { fill: none; stroke: #f8ab4a; stroke-width: 3.7; stroke-linejoin: round; }
.cities, .countries, .river-names { font: 9.6px "Noto Sans", "Open Sans", sans-serif; text-anchor: middle; fill: #333; stroke: #fff; stroke-opacity: .8; stroke-width: 2px; paint-order: stroke; stroke-linejoin: round; }
.capital { font-weight: bold; font-size: 12px; }
.countries { fill: #8b9b93; letter-spacing: 1px; }
.river-names { text-anchor: start; font-style: italic; fill: #4c80bd; stroke-opacity: .3; letter-spacing: .7px; }

.btn { background: #fff; height: 28px; border-radius: 3px; box-shadow: 0 1px 3px rgba(0,0,0,.35); display: flex; align-items: center; font-size: 13px; color: #000; padding: 0; }
.sq { width: 28px; justify-content: center; }
.controls { position: relative; display: flex; gap: 10px; padding: 10px; }
.search { display: flex; width: 315px; height: 28px; box-shadow: 0 1px 3px rgba(0,0,0,.35); border-radius: 3px; overflow: hidden; margin-right: auto; }
.search span { flex: 1; background: #fff; color: #777; font-size: 13px; line-height: 27px; padding-left: 11px; }
.search button { width: 63px; background: #ffdb4d; font-size: 13px; padding: 0 0 1px; }
.traffic { width: 88px; padding: 0 0 1px 6px; gap: 9px; }
.layers { width: 87px; padding: 0 0 1px 5px; }
.layers span { margin: 0 5px 0 7px; }
.zoom { position: absolute; left: 10px; top: 108px; width: 28px; }
.track { width: 8px; height: 150px; margin: 0 auto; background: rgba(255,255,255,.45); border: solid rgba(120,140,130,.35); border-width: 0 2px; display: flex; justify-content: center; }
.thumb { flex: none; margin-top: 103px; width: 28px; height: 15px; border-radius: 3px; background: #fff; box-shadow: 0 1px 3px rgba(0,0,0,.35); display: flex; align-items: center; justify-content: center; }
.thumb::before { content: ""; width: 12px; height: 6px; background: radial-gradient(circle, #666 .6px, transparent .9px) 0 0 / 3px 3px; }
.links { position: absolute; left: 8px; bottom: 8px; display: flex; gap: 9px; align-items: center; }
.open { height: 24px; width: 174px; background: #fff; border-radius: 3px; box-shadow: 0 1px 3px rgba(0,0,0,.35); display: flex; align-items: center; gap: 6px; padding-left: 6px; white-space: nowrap; }
.create { background: rgba(255,255,255,.55); border-radius: 3px; text-decoration: underline; padding: 0 3px; height: 15px; line-height: 15px; white-space: nowrap; }
.scale { position: absolute; left: 1514px; top: 349px; display: flex; align-items: center; font-size: 11px; }
.scale span { background: rgba(255,255,255,.65); border-radius: 3px; width: 42px; height: 15px; line-height: 14px; text-align: center; }
.ruler { position: absolute; right: 10px; top: 342px; }
.copy { position: absolute; right: 3px; bottom: 9px; background: rgba(255,255,255,.65); border-radius: 3px; padding: 0 4px; height: 15px; line-height: 15px; font-size: 11px; white-space: nowrap; }
.balloon { position: absolute; left: 906px; top: 35px; width: 442px; height: 60px; background: #fff; box-shadow: 0 0 0 1px rgba(0,0,0,.12), 0 6px 16px rgba(0,0,0,.28); display: flex; justify-content: space-between; padding: 10px 8px 0 12px; }
.balloon p { margin: 0; width: 390px; font-size: 13px; line-height: 20px; color: #000; }
.balloon svg { margin-top: 3px; }
.balloon::after { content: ""; position: absolute; left: 48px; top: 60px; border: solid transparent; border-width: 12px 10px 0 9px; border-top-color: #fff; }

.notes { padding: 31px 9px 0; color: #abb2bf; font-size: 18.72px; line-height: 22px; }
.notes h2 { margin: 0 0 17.5px; font-size: 28.08px; line-height: 34px; }
.notes p { margin: 0 0 22.5px; }
.notes .lead { margin-top: 22.5px; }
.notes .next { margin-top: -3.3px; }
.notes a { color: #61afef; font-weight: bold; }
```
